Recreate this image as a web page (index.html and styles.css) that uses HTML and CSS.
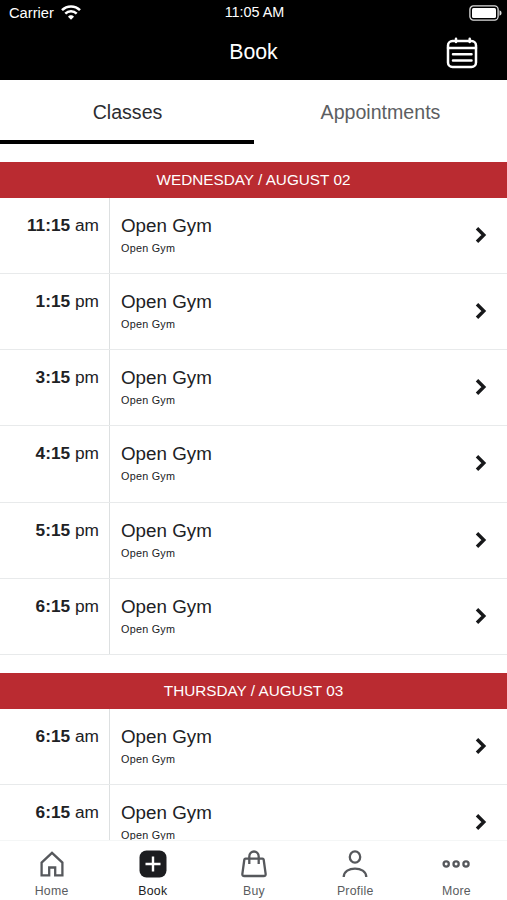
FILE: index.html
```html
<!DOCTYPE html>
<html lang="en">
<head>
    <meta charset="UTF-8">
    <meta name="viewport" content="width=device-width, initial-scale=1.0">
    <title>Book</title>
    <link rel="stylesheet" href="styles.css">
</head>
<body>
    <div class="app">
        <header class="header">
            <div class="status-bar">
                <div class="carrier">
                    <span>Carrier</span>
                    <svg class="wifi" width="20" height="15" viewBox="0 0 20 15" fill="none" stroke="#fff" stroke-width="2.5">
                        <path d="M1 5.2C6 0.1 14 0.1 19 5.2"/>
                        <path d="M4.3 8.7C7.5 5.5 12.5 5.5 15.7 8.7"/>
                        <path d="M7 11.7C8.7 9.8 11.3 9.8 13 11.7L10 14.8Z" fill="#fff" stroke="none"/>
                    </svg>
                </div>
                <div class="clock">11:05 AM</div>
                <svg class="battery" width="33" height="16" viewBox="0 0 33 16">
                    <rect x="0.9" y="0.9" width="28.2" height="14.2" rx="3.5" fill="none" stroke="#ddd" stroke-width="1.3"/>
                    <rect x="3" y="3" width="24" height="10" rx="1.5" fill="#fff"/>
                    <path d="M30.5 5.2Q32.6 6 32.6 8T30.5 10.8Z" fill="#ddd"/>
                </svg>
            </div>
            <div class="title-bar">
                <h1>Book</h1>
                <svg class="calendar" width="32" height="32" viewBox="0 0 32 32" fill="none" stroke="#fff" stroke-width="2.5" stroke-linecap="round">
                    <rect x="2" y="4" width="28" height="26" rx="4.5"/>
                    <path d="M2 11H30M10 1.8V5M23.7 1.8V5M7 17.2H25.5M7 23.5H25.5"/>
                </svg>
            </div>
        </header>

        <div class="tabs">
            <div class="tab active">Classes</div>
            <div class="tab">Appointments</div>
        </div>

        <main class="schedule">
            <section class="day">
                <h2>WEDNESDAY / AUGUST 02</h2>
                <div class="row">
                    <div class="time"><b>11:15</b> am</div>
                    <div class="info"><div class="name">Open Gym</div><div class="sub">Open Gym</div></div>
                    <svg class="chevron" viewBox="0 0 12 18"><path d="M2 2.2L8.8 9L2 15.8"/></svg>
                </div>
                <div class="row">
                    <div class="time"><b>1:15</b> pm</div>
                    <div class="info"><div class="name">Open Gym</div><div class="sub">Open Gym</div></div>
                    <svg class="chevron" viewBox="0 0 12 18"><path d="M2 2.2L8.8 9L2 15.8"/></svg>
                </div>
                <div class="row">
                    <div class="time"><b>3:15</b> pm</div>
                    <div class="info"><div class="name">Open Gym</div><div class="sub">Open Gym</div></div>
                    <svg class="chevron" viewBox="0 0 12 18"><path d="M2 2.2L8.8 9L2 15.8"/></svg>
                </div>
                <div class="row">
                    <div class="time"><b>4:15</b> pm</div>
                    <div class="info"><div class="name">Open Gym</div><div class="sub">Open Gym</div></div>
                    <svg class="chevron" viewBox="0 0 12 18"><path d="M2 2.2L8.8 9L2 15.8"/></svg>
                </div>
                <div class="row">
                    <div class="time"><b>5:15</b> pm</div>
                    <div class="info"><div class="name">Open Gym</div><div class="sub">Open Gym</div></div>
                    <svg class="chevron" viewBox="0 0 12 18"><path d="M2 2.2L8.8 9L2 15.8"/></svg>
                </div>
                <div class="row">
                    <div class="time"><b>6:15</b> pm</div>
                    <div class="info"><div class="name">Open Gym</div><div class="sub">Open Gym</div></div>
                    <svg class="chevron" viewBox="0 0 12 18"><path d="M2 2.2L8.8 9L2 15.8"/></svg>
                </div>
            </section>
            <section class="day">
                <h2>THURSDAY / AUGUST 03</h2>
                <div class="row">
                    <div class="time"><b>6:15</b> am</div>
                    <div class="info"><div class="name">Open Gym</div><div class="sub">Open Gym</div></div>
                    <svg class="chevron" viewBox="0 0 12 18"><path d="M2 2.2L8.8 9L2 15.8"/></svg>
                </div>
                <div class="row">
                    <div class="time"><b>6:15</b> am</div>
                    <div class="info"><div class="name">Open Gym</div><div class="sub">Open Gym</div></div>
                    <svg class="chevron" viewBox="0 0 12 18"><path d="M2 2.2L8.8 9L2 15.8"/></svg>
                </div>
            </section>
        </main>

        <nav class="nav">
            <a class="nav-item">
                <svg viewBox="0 0 30 30"><path d="M4.6 12.6L15 2.8L25.4 12.6V25.4H18.2V17.5H12.2V25.4H4.6Z"/></svg>
                <span>Home</span>
            </a>
            <a class="nav-item active">
                <svg viewBox="0 0 30 30"><rect class="solid" x="1.5" y="0.5" width="27" height="27" rx="7"/><path class="plus" d="M15 6.5V21.5M7.5 14H22.5"/></svg>
                <span>Book</span>
            </a>
            <a class="nav-item">
                <svg viewBox="0 0 30 30"><path d="M6.5 8.7H23.5Q24.5 8.7 24.7 9.8L26.6 23.6Q27 26 24.6 26H5.4Q3 26 3.4 23.6L5.3 9.8Q5.5 8.7 6.5 8.7ZM10.3 14V6.5C10.3 -0.2 19.7 -0.2 19.7 6.5V14"/></svg>
                <span>Buy</span>
            </a>
            <a class="nav-item">
                <svg viewBox="0 0 30 30"><ellipse cx="15" cy="7" rx="5.2" ry="5.7"/><path d="M3.7 27C3.7 15.7 26.3 15.7 26.3 27"/></svg>
                <span>Profile</span>
            </a>
            <a class="nav-item">
                <svg viewBox="0 0 30 30"><circle cx="5.2" cy="14" r="2.6"/><circle cx="15.1" cy="14" r="2.6"/><circle cx="25" cy="14" r="2.6"/></svg>
                <span>More</span>
            </a>
        </nav>
    </div>
</body>
</html>
```
FILE: styles.css
```css
* {
    margin: 0;
    padding: 0;
    box-sizing: border-box;
}

body {
    font-family: "Liberation Sans", Arial, sans-serif;
    background: #fff;
    color: #202124;
}

.app {
    height: 900px;
    display: flex;
    flex-direction: column;
    overflow: hidden;
}

.header {
    height: 80px;
    flex-shrink: 0;
    background: #000;
    color: #fff;
}

.status-bar {
    height: 25px;
    padding: 0 5px 0 9px;
    display: grid;
    grid-template-columns: 1fr auto 1fr;
    align-items: center;
    font-size: 14.4px;
}

.carrier {
    display: flex;
    align-items: center;
    gap: 7px;
    font-size: 14.7px;
}

.clock {
    padding: 0 2px 2px 0;
}

.battery {
    justify-self: end;
}

.title-bar {
    height: 55px;
    padding: 0 29px;
    display: grid;
    grid-template-columns: 1fr auto 1fr;
    align-items: center;
}

.title-bar h1 {
    grid-column: 2;
    font-size: 21.3px;
    font-weight: normal;
}

.calendar {
    justify-self: end;
}

.tabs {
    height: 64px;
    flex-shrink: 0;
    display: flex;
}

.tab {
    flex: 1;
    border-bottom: 4px solid transparent;
    line-height: 65px;
    text-align: center;
    font-size: 19.6px;
    color: #5c5e62;
}

.tab.active {
    border-color: #000;
    padding-left: 1px;
    color: #2b2c30;
}

.schedule {
    flex: 1;
    min-height: 0;
    overflow: hidden;
}

.day {
    padding-top: 18px;
}

.day h2 {
    height: 36px;
    line-height: 36px;
    background: #ba2b31;
    color: #fff;
    text-align: center;
    font-size: 15.3px;
    font-weight: normal;
}

.row {
    height: 76.17px;
    display: flex;
    border-bottom: 1px solid #e8eaeb;
}

.time {
    width: 110px;
    padding: 16px 10px 0 0;
    border-right: 1px solid #dde0e1;
    text-align: right;
    font-size: 17.3px;
    line-height: 23px;
}

.info {
    flex: 1;
    padding: 17px 0 0 11px;
}

.name {
    font-size: 18.8px;
    line-height: 22px;
}

.sub {
    font-size: 10.8px;
    letter-spacing: 0.25px;
    line-height: 14px;
    margin-top: 4px;
}

.chevron {
    width: 12px;
    height: 18px;
    margin: 28px 20px 0 0;
    fill: none;
    stroke: #17181a;
    stroke-width: 3.4;
}

.nav {
    height: 60px;
    flex-shrink: 0;
    padding: 9px 0 0 1px;
    display: flex;
    border-top: 1px solid #f4f6f6;
    background: #fff;
}

.nav-item {
    flex: 1;
    display: flex;
    flex-direction: column;
    align-items: center;
    gap: 4px;
    color: #5a5c60;
    font-size: 12.3px;
    letter-spacing: 0.25px;
}

.nav-item svg {
    width: 30px;
    height: 30px;
    flex-shrink: 0;
    fill: none;
    stroke: #56585c;
    stroke-width: 2.3;
}

.nav-item.active {
    color: #202124;
}

.nav-item .solid {
    fill: #1c1d20;
    stroke: none;
}

.nav-item .plus {
    stroke: #fff;
    stroke-width: 2.4;
}
```
